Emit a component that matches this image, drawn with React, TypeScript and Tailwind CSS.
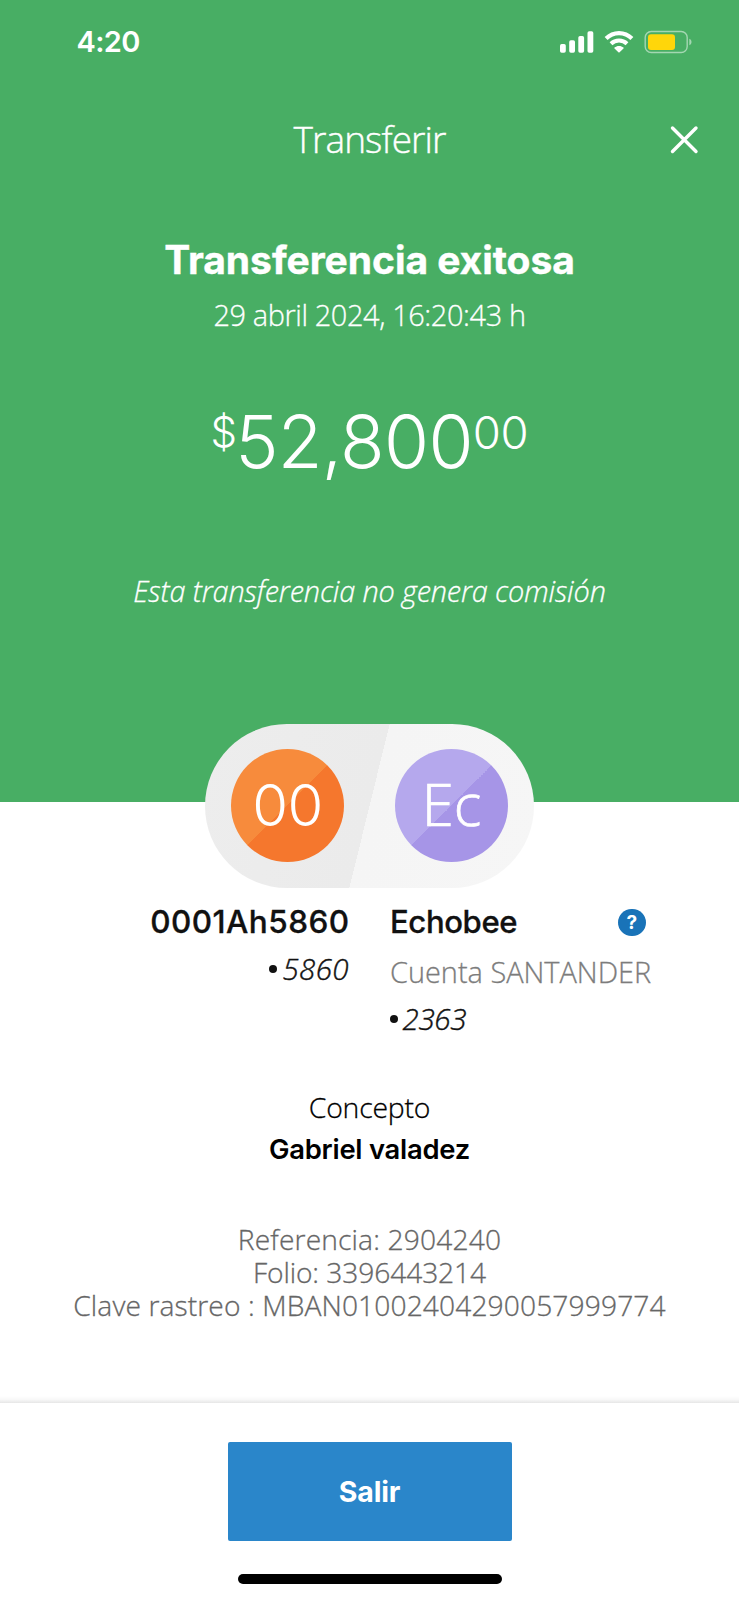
import type { ReactNode } from "react";

function StatusIcons() {
  return (
    <svg className="block h-[24px] w-[133px]" viewBox="0 0 133 24" fill="none" aria-hidden="true">
      <g fill="#fff">
        <rect x="0" y="14" width="5.8" height="8.7" rx="1.7" />
        <rect x="9.2" y="10.200" width="5.8" height="12.5" rx="1.7" />
        <rect x="18.3" y="6" width="5.8" height="16.7" rx="1.7" />
        <rect x="27.5" y="1.200" width="5.8" height="21.5" rx="1.7" />
        <path d="M59 15.900c1.700 0 3.300.6 4.500 1.700.3.300.3.700 0 1l-3.900 3.700c-.3.300-.9.300-1.200 0l-3.900-3.700c-.3-.3-.3-.7 0-1 1.200-1.100 2.800-1.700 4.500-1.700z" />
      </g>
      <path d="M46.100 8.500C49.600 5 54.100 3.100 59 3.100s9.400 1.900 12.900 5.400" stroke="#fff" strokeWidth="4.200" />
      <path d="M51 13.700c2.200-2.100 4.900-3.200 8-3.200s5.800 1.100 8 3.200" stroke="#fff" strokeWidth="4" />
      <rect x="85.200" y="1.500" width="42" height="21" rx="6" stroke="#fff" strokeOpacity=".5" strokeWidth="1.400" />
      <rect x="88" y="4.200" width="27" height="15.800" rx="3" fill="#ffd60a" />
      <path d="M129.300 8.800c1.400.5 2.200 1.700 2.200 3.200s-.8 2.700-2.200 3.200z" fill="#fff" fillOpacity=".5" />
    </svg>
  );
}

function Avatar({ className, children }: { className: string; children: ReactNode }) {
  return (
    <div className={"flex size-[113px] items-center justify-center rounded-full font-light text-white " + className}>
      {children}
    </div>
  );
}

function Masked({ digits, className }: { digits: string; className: string }) {
  return (
    <span className="flex h-[40px] items-center">
      <span className="mr-[5px] size-[8px] rounded-full bg-[#111]" />
      <span className={"font-['Open_Sans',sans-serif] text-[29.5px] leading-[40px] font-light italic [-webkit-text-stroke:0.4px] " + className}>{digits}</span>
    </span>
  );
}

export default function App() {
  return (
    <div className="flex h-[1600px] w-[739px] flex-col overflow-hidden bg-white font-['Open_Sans',sans-serif] text-[#111]">
      <header className="flex h-[802px] shrink-0 flex-col items-center bg-[#48ae64] text-white">
        <div className="flex h-[84px] w-full items-center justify-between pr-[46px] pl-[76.500px]">
          <span className="pb-px font-[Inter,sans-serif] text-[29px] leading-none font-semibold tracking-[-0.6px]">4:20</span>
          <StatusIcons />
        </div>
        <div className="mt-px grid h-[108px] w-full grid-cols-[1fr_auto_1fr] items-center pr-[40px]">
          <span className="w-[40px]" />
          <h1 className="pb-[1px] pl-[40px] text-[37px] leading-none font-light tracking-[-0.9px] [-webkit-text-stroke:0.4px]">Transferir</h1>
          <button aria-label="Cerrar" className="justify-self-end">
            <svg className="block size-[29px]" viewBox="0 0 29 29" fill="none" stroke="#fff" strokeWidth="3.400" strokeLinecap="round">
              <path d="M2.500 3l23.500 23.500M26 3L2.500 26.500" />
            </svg>
          </button>
        </div>
        <h2 className="mt-[45px] h-[44px] font-[Inter,sans-serif] text-[39px] leading-[44px] font-bold tracking-[-0.05px] [-webkit-text-stroke:0.4px]">
          Transferencia exitosa
        </h2>
        <p className="mt-[13px] h-[40px] text-[28.9px] leading-[40px] font-light tracking-[-0.38px] [-webkit-text-stroke:0.3px]">29 abril 2024, 16:20:43 h</p>
        <p className="mt-[67px] flex h-[80px] items-start font-[Inter,sans-serif] font-light">
          <span className="pt-[7px] text-[42px] leading-[45px]">$</span>
          <span className="-ml-[2px] text-[73px] leading-[80px] tracking-[-0.7px]">52,800</span>
          <span className="pt-[8px] text-[45.500px] leading-[46px] tracking-[-0.3px]">00</span>
        </p>
        <p className="mt-[89px] h-[40px] text-[28.9px] leading-[40px] font-light tracking-[-0.16px] italic [-webkit-text-stroke:0.3px]">
          Esta transferencia no genera comisión
        </p>
      </header>

      <main className="flex flex-col items-center">
        <div className="relative -mt-[78.500px] flex h-[164.500px] w-[329px] shrink-0 items-center justify-between rounded-full bg-[linear-gradient(103.8deg,#ededed_0%,#ebebeb_50%,#f5f5f5_50%,#f6f6f6_100%)] px-[26px]">
          <Avatar className="bg-[linear-gradient(135deg,#f78b3c_50%,#f5772d_50%)] font-[Inter,sans-serif] text-[58px] tracking-[-0.5px]">00</Avatar>
          <Avatar className="bg-[linear-gradient(135deg,#b5a8ed_50%,#a695e7_50%)] pb-[4px] text-[58px] [-webkit-text-stroke:0.7px]">Ec</Avatar>
        </div>

        <section className="mt-[14px] grid w-full grid-cols-[349px_1fr] gap-x-[41px]">
          <div className="flex flex-col items-end">
            <h3 className="-mr-[0.5px] h-[41px] font-[Inter,sans-serif] text-[31.5px] leading-[40px] font-medium tracking-[0.45px] [-webkit-text-stroke:0.3px]">0001Ah5860</h3>
            <div className="mt-[5.500px]">
              <Masked digits="5860" className="tracking-[0.4px]" />
            </div>
          </div>
          <div className="flex flex-col items-start">
            <div className="flex h-[41px] w-[255.500px] items-center justify-between">
              <h3 className="font-[Inter,sans-serif] text-[31.1px] leading-[41px] font-medium tracking-[-0.4px] [-webkit-text-stroke:0.3px]">Echobee</h3>
              <span className="flex size-[27.500px] items-center justify-center rounded-full bg-[#1973b8] font-[Inter,sans-serif] text-[19px] leading-none font-bold text-white">
                ?
              </span>
            </div>
            <p className="mt-[8.500px] h-[40px] text-[28.9px] leading-[40px] font-light whitespace-nowrap text-[#7c7c7c] [-webkit-text-stroke:0.3px]">Cuenta SANTANDER</p>
            <div className="mt-[7px] -ml-[0.5px]">
              <Masked digits="2363" className="tracking-[-0.3px]" />
            </div>
          </div>
        </section>

        <section className="mt-[48px] flex flex-col items-center">
          <p className="h-[40px] text-[28.4px] leading-[40px] font-light tracking-[-0.2px] text-black [-webkit-text-stroke:0.3px]">Concepto</p>
          <p className="mt-[2px] h-[40px] font-[Inter,sans-serif] text-[27.4px] leading-[40px] font-semibold tracking-[-0.25px] text-black">
            Gabriel valadez
          </p>
        </section>

        <section className="mt-[54px] flex flex-col items-center text-[28.2px] leading-[33px] font-light whitespace-nowrap text-[#666] [-webkit-text-stroke:0.3px]">
          <p className="tracking-[0.15px]">Referencia: 2904240</p>
          <p className="tracking-[-0.1px]">Folio: 3396443214</p>
          <p className="tracking-[0.1px]">Clave rastreo : MBAN01002404290057999774</p>
        </section>
      </main>

      <footer className="mt-auto flex h-[204px] shrink-0 flex-col items-center">
        <div className="h-[7px] w-full shrink-0 bg-[linear-gradient(180deg,#ffffff,#f8f8f8_50%,#e6e6e6)]" />
        <button className="mt-[39px] h-[99px] w-[284px] rounded-[2px] bg-[#2a86ca] pt-px font-[Inter,sans-serif] text-[28.500px] leading-none font-bold tracking-[-0.2px] text-white">
          Salir
        </button>
        <div className="mt-[33px] h-[10px] w-[264px] rounded-full bg-black" />
      </footer>
    </div>
  );
}
